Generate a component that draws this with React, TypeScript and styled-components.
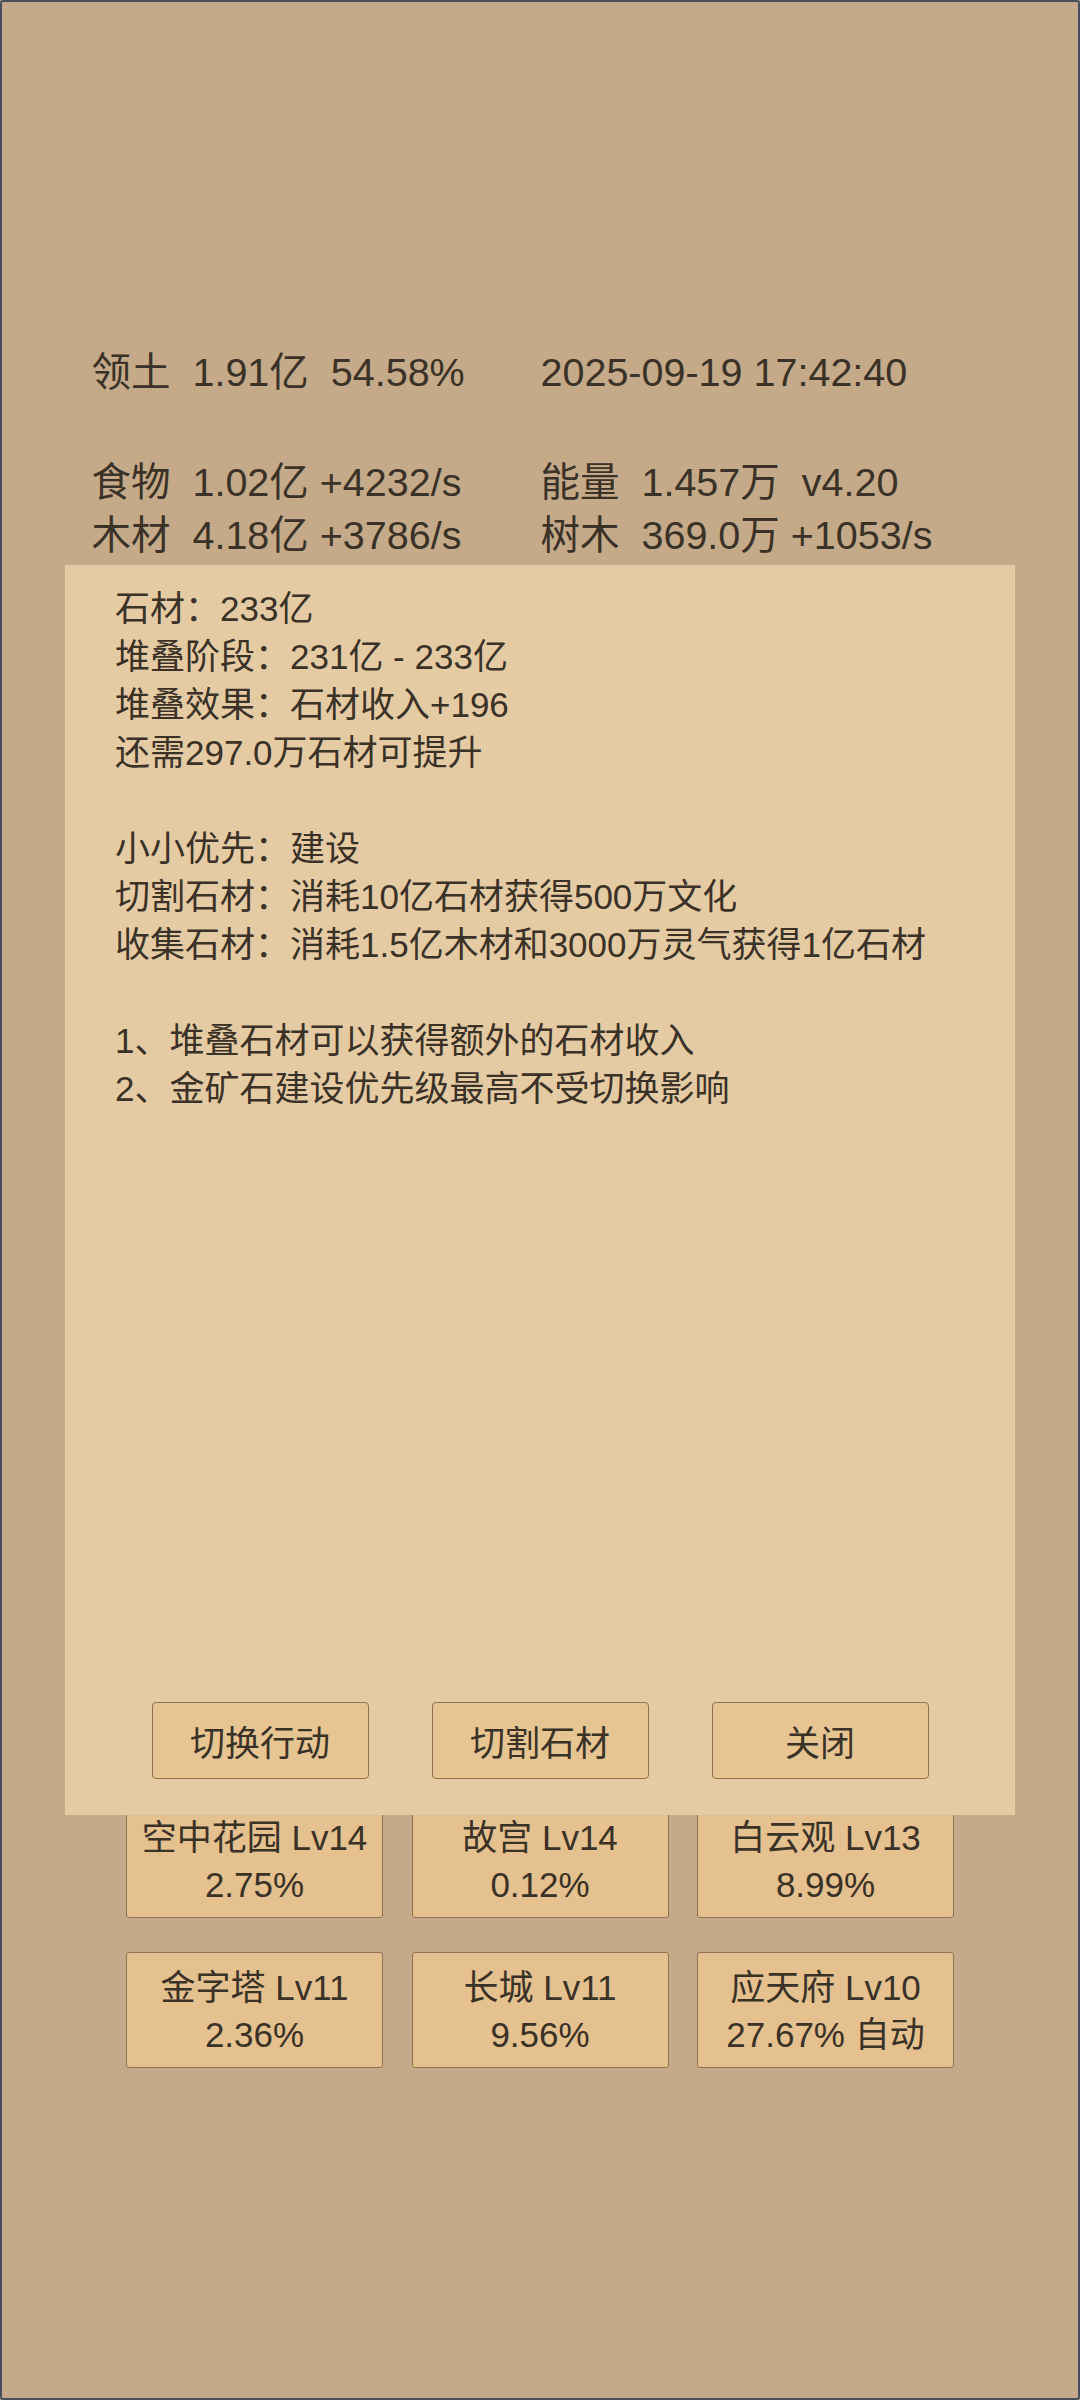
import styled, { createGlobalStyle } from 'styled-components';

const GlobalStyle = createGlobalStyle`
  html, body {
    margin: 0;
    padding: 0;
    background: #c4aa88;
  }
  * {
    box-sizing: border-box;
  }
`;

const Page = styled.div`
  position: relative;
  width: 1080px;
  height: 2400px;
  overflow: hidden;
  background: #c4aa88;
  border: 2px solid #474f5e;
  border-radius: 3px;
  padding-top: 343.5px;
  color: #3a3127;
  font-family: "Liberation Sans", "Noto Sans CJK SC", sans-serif;
`;

const StatsGrid = styled.div`
  display: grid;
  grid-template-columns: 449px 1fr;
  padding-left: 89.5px;
  font-size: 39.5px;
  line-height: 53px;
  white-space: pre;
`;

const StatCell = styled.div<{ $gapAfter?: boolean }>`
  margin-bottom: ${p => (p.$gapAfter ? '57px' : '0')};
`;

// the dialog sits over the upper part of the building list
const BuildingGrid = styled.div`
  display: grid;
  grid-template-columns: repeat(3, 257px);
  column-gap: 28.5px;
  row-gap: 34px;
  justify-content: center;
  margin-top: 1240.5px;
`;

const BuildingCard = styled.div`
  background: #e4c18f;
  border: 1px solid #8f7352;
  border-radius: 3px;
  padding: 11px 0 9px;
  text-align: center;
  font-size: 35px;
  line-height: 47px;
  white-space: nowrap;
`;

const Dialog = styled.div`
  position: absolute;
  top: 563px;
  left: 63px;
  width: 950px;
  height: 1250px;
  background: #e5cba3;
  display: flex;
  flex-direction: column;
  padding: 20px 48px 36px 50px;
`;

const DialogBody = styled.div`
  flex: 1;
  font-size: 35px;
  line-height: 48px;
  white-space: pre;
`;

const DialogLine = styled.div`
  min-height: 48px;
`;

const ButtonRow = styled.div`
  display: flex;
  justify-content: center;
  gap: 63px;
  margin-left: -2px;
`;

const DialogButton = styled.button`
  width: 217px;
  height: 77px;
  background: #e6c593;
  border: 1px solid #8d7150;
  border-radius: 4px;
  color: #3a3127;
  font-family: "Liberation Sans", "Noto Sans CJK SC", sans-serif;
  font-size: 35px;
  padding: 0;
  cursor: pointer;
`;

const stats: [string, string][] = [
  ['领土  1.91亿  54.58%', '2025-09-19 17:42:40'],
  ['食物  1.02亿 +4232/s', '能量  1.457万  v4.20'],
  ['木材  4.18亿 +3786/s', '树木  369.0万 +1053/s'],
];

const buildings: [string, string][] = [
  ['空中花园 Lv14', '2.75%'],
  ['故宫 Lv14', '0.12%'],
  ['白云观 Lv13', '8.99%'],
  ['金字塔 Lv11', '2.36%'],
  ['长城 Lv11', '9.56%'],
  ['应天府 Lv10', '27.67% 自动'],
];

const dialogLines = [
  '石材：233亿',
  '堆叠阶段：231亿 - 233亿',
  '堆叠效果：石材收入+196',
  '还需297.0万石材可提升',
  '',
  '小小优先：建设',
  '切割石材：消耗10亿石材获得500万文化',
  '收集石材：消耗1.5亿木材和3000万灵气获得1亿石材',
  '',
  '1、堆叠石材可以获得额外的石材收入',
  '2、金矿石建设优先级最高不受切换影响',
];

export default function App() {
  return (
    <>
      <GlobalStyle />
      <Page>
        <StatsGrid>
          {stats.flatMap(([left, right], i) => [
            <StatCell key={`l${i}`} $gapAfter={i === 0}>{left}</StatCell>,
            <StatCell key={`r${i}`} $gapAfter={i === 0}>{right}</StatCell>,
          ])}
        </StatsGrid>

        <BuildingGrid>
          {buildings.map(([name, rate]) => (
            <BuildingCard key={name}>
              <div>{name}</div>
              <div>{rate}</div>
            </BuildingCard>
          ))}
        </BuildingGrid>

        <Dialog>
          <DialogBody>
            {dialogLines.map((line, i) => (
              <DialogLine key={i}>{line}</DialogLine>
            ))}
          </DialogBody>
          <ButtonRow>
            <DialogButton>切换行动</DialogButton>
            <DialogButton>切割石材</DialogButton>
            <DialogButton>关闭</DialogButton>
          </ButtonRow>
        </Dialog>
      </Page>
    </>
  );
}
